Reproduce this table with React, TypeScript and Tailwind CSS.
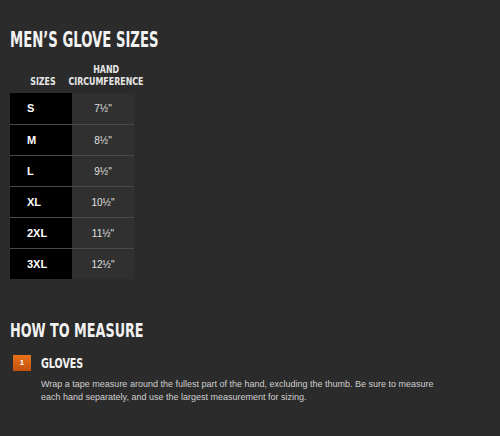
import React from 'react';

const rows = [
  { size: 'S', hand: '7½"' },
  { size: 'M', hand: '8½"' },
  { size: 'L', hand: '9½"' },
  { size: 'XL', hand: '10½"' },
  { size: '2XL', hand: '11½"' },
  { size: '3XL', hand: '12½"' },
];

const App: React.FC = () => {
  return (
    <div className="w-[500px] h-[436px] bg-[#2b2b2b] text-white overflow-hidden px-[10px] pt-[28px] font-['Liberation_Sans',Arial,sans-serif]">
      <h1 className="origin-left scale-x-[0.7] whitespace-nowrap font-['DejaVu_Sans_Condensed',sans-serif] text-[21px] font-bold leading-[24px] text-[#f2f2f2]">
        MEN&rsquo;S GLOVE SIZES
      </h1>

      <div className="mt-[12px] w-[124px]">
        <div className="flex items-end font-['DejaVu_Sans_Condensed',sans-serif] text-[11px] font-bold leading-[12px] text-[#e6e6e6] pb-[5px]">
          <div className="w-[62px] flex justify-center pl-[4px]">
            <span className="scale-x-[0.8]">SIZES</span>
          </div>
          <div className="w-[62px] flex flex-col items-center pl-[6px] whitespace-nowrap">
            <span className="scale-x-[0.8]">HAND</span>
            <span className="scale-x-[0.8]">CIRCUMFERENCE</span>
          </div>
        </div>
        {rows.map((r, i) => (
          <div key={r.size} className={`flex h-[31px] ${i > 0 ? 'border-t border-[#4a4a4a]' : ''}`}>
            <div className="w-[62px] bg-black flex items-center pl-[17px] text-[11px] font-bold text-white">
              {r.size}
            </div>
            <div className="w-[62px] bg-[#303030] flex items-center justify-center text-[10px] text-[#e0e0e0]">
              {r.hand}
            </div>
          </div>
        ))}
      </div>

      <h2 className="mt-[40px] origin-left scale-x-[0.71] whitespace-nowrap font-['DejaVu_Sans_Condensed',sans-serif] text-[20px] font-bold leading-[22px] text-[#f2f2f2]">
        HOW TO MEASURE
      </h2>

      <div className="mt-[14px] flex">
        <div className="w-[18px] h-[16px] ml-[3px] bg-gradient-to-b from-[#e8731c] to-[#c2500c] flex items-center justify-center text-[8px] font-bold text-white">
          1
        </div>
        <div className="ml-[10px]">
          <div className="origin-left scale-x-[0.76] font-['DejaVu_Sans_Condensed',sans-serif] text-[14px] font-bold leading-[16px] text-[#f2f2f2]">GLOVES</div>
          <p className="mt-[7px] text-[9px] leading-[13px] text-[#cfcfcf] w-[400px]">
            Wrap a tape measure around the fullest part of the hand, excluding the thumb. Be sure to measure each hand separately, and use the largest measurement for sizing.
          </p>
        </div>
      </div>
    </div>
  );
};

export default App;
